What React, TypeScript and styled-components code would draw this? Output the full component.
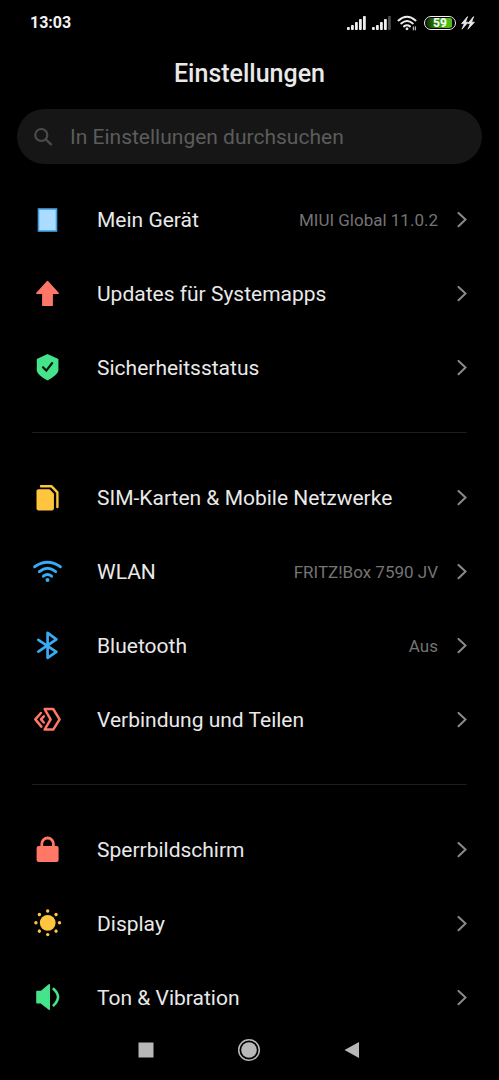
import React from "react";
import styled, { createGlobalStyle } from "styled-components";

const GlobalStyle = createGlobalStyle`
  * { box-sizing: border-box; }
  body {
    margin: 0;
    background: #000;
    color: #e9e9e9;
    font-family: Roboto, "Noto Sans", sans-serif;
  }
`;

const Screen = styled.div`
  display: flex;
  flex-direction: column;
  height: 100vh;
  background: #000;
`;

const StatusBar = styled.div`
  display: flex;
  align-items: center;
  justify-content: space-between;
  flex: none;
  height: 45px;
  padding: 0 24px 0 30px;
`;

const Clock = styled.time`
  font-size: 16px;
  line-height: 20px;
  font-weight: 700;
  color: #f2f2f2;
`;

const StatusIcons = styled.div`
  display: flex;
  align-items: center;
  gap: 6px;
`;

const BatteryGroup = styled.div`
  display: flex;
  align-items: center;
  gap: 5px;
`;

const Battery = styled.div`
  display: flex;
  align-items: center;
  justify-content: center;
  width: 32px;
  height: 14px;
  border: 1px solid #f0f0f0;
  border-radius: 7px;
  background: linear-gradient(90deg, #0c2a02 0, #2c7a08 30%, #4cbc18 70%, #4cbc18 92%, #000 92%) content-box;
  padding: 1px;
  overflow: hidden;
  font-size: 12px;
  line-height: 12px;
  font-weight: 700;
  color: #fff;
`;

const Header = styled.header`
  flex: none;
  padding: 13px 16px 19px;
  text-align: center;
`;

const Title = styled.h1`
  margin: 0;
  font-size: 25px;
  line-height: 32px;
  font-weight: 500;
`;

const SearchBox = styled.label`
  display: flex;
  align-items: center;
  flex: none;
  gap: 17px;
  height: 55px;
  margin: 0 17px 19px;
  padding: 0 16px;
  border-radius: 28px;
  background: #161616;
`;

const SearchInput = styled.input`
  flex: 1;
  min-width: 0;
  padding: 0;
  border: 0;
  outline: 0;
  background: transparent;
  font: inherit;
  font-size: 21px;
  line-height: 28px;
  color: #e9e9e9;
  &::placeholder {
    color: #5c5c5c;
    opacity: 1;
  }
`;

const Content = styled.main`
  flex: 1;
  min-height: 0;
  overflow-y: auto;
  scrollbar-width: none;
`;

const Group = styled.ul`
  list-style: none;
  margin: 0;
  padding: 0;
  & + & {
    padding-top: 27px;
  }
  & + &::before {
    content: "";
    display: block;
    height: 1px;
    margin: 0 32px 28px;
    background: #1e1e1e;
  }
`;

const Row = styled.button`
  display: flex;
  align-items: center;
  width: 100%;
  height: 74px;
  padding: 0 32px;
  border: 0;
  background: transparent;
  font: inherit;
  text-align: left;
  color: inherit;
  cursor: pointer;
`;

const Label = styled.span`
  flex: 1;
  margin-left: 33px;
  font-size: 21px;
  line-height: 28px;
  white-space: nowrap;
`;

const Value = styled.span`
  font-size: 17px;
  line-height: 24px;
  color: #747474;
  white-space: nowrap;
  margin-right: 19px;
`;

const NavBar = styled.nav`
  display: flex;
  align-items: center;
  justify-content: center;
  flex: none;
  gap: 71px;
  height: 60px;
  padding-right: 2px;
`;

const NavButton = styled.button`
  display: flex;
  padding: 4px;
  border: 0;
  background: transparent;
  cursor: pointer;
`;

const RED = "#ff7767";
const BLUE = "#38aaf6";
const GREEN = "#44e38c";
const YELLOW = "#ffc53f";

const glyphs = {
  device: <rect x="6.5" y="5" width="18" height="22" fill="#a9dcff" stroke="#469fe0" strokeWidth="1.6" />,
  update: (
    <path
      d="M15.5 3.4 L26.2 15.2 H20.2 V27.4 H10.8 V15.2 H4.8 Z"
      fill={RED}
      stroke={RED}
      strokeWidth="1.4"
      strokeLinejoin="round"
    />
  ),
  shield: (
    <>
      <path
        d="M15.5 3 L25.5 7.6 V18.6 Q24.6 22.6 15.5 27.4 Q6.4 22.6 5.7 18.6 V7.6 Z"
        fill={GREEN}
        stroke={GREEN}
        strokeWidth="1.8"
        strokeLinejoin="round"
      />
      <path d="M11 15.2 L14.3 18.7 L20.2 11" fill="none" stroke="#04140b" strokeWidth="2.1" strokeLinecap="round" />
    </>
  ),
  sim: (
    <>
      <path
        d="M6 7.8 H17.6 L21.4 11.8 V26.8 Q21.4 28 20.2 28 H6.2 Q5 28 5 26.8 V8.8 Q5 7.8 6 7.8 Z"
        fill={YELLOW}
        stroke={YELLOW}
        strokeLinejoin="round"
      />
      <path
        d="M9 4.2 H19.4 L25.4 10.4 V25"
        fill="none"
        stroke={YELLOW}
        strokeWidth="2.4"
        strokeLinecap="round"
        strokeLinejoin="round"
      />
    </>
  ),
  wlan: (
    <g fill="none" stroke={BLUE} strokeWidth="2.9" strokeLinecap="round">
      <path d="M2.6 10.8 Q15.5 1.8 28.4 10.8" />
      <path d="M7.3 15.6 Q15.5 9 23.7 15.6" />
      <path d="M11.4 20.2 Q15.5 16.8 19.6 20.2" />
      <circle cx="15.5" cy="24" r="2" fill={BLUE} stroke="none" />
    </g>
  ),
  bluetooth: (
    <path
      d="M6.3 9.8 L24.4 21.8 L15.6 27.8 V2.8 L24.4 9.3 L6.3 21.6"
      fill="none"
      stroke={BLUE}
      strokeWidth="2.7"
      strokeLinecap="round"
      strokeLinejoin="round"
    />
  ),
  share: (
    <g fill="none" stroke={RED} strokeWidth="2.5" strokeLinejoin="round" strokeLinecap="round">
      <path d="M12.6 5 H21.2 L27.6 15.4 L21.2 25.6 H12.6 L18.6 15.4 Z" />
      <path d="M8.9 9 L3.3 15.4 L9.4 22.6" />
      <path d="M11.8 12.3 L9 15.4 L11.8 18.5" />
    </g>
  ),
  lock: (
    <>
      <rect x="4.6" y="12" width="22" height="16" rx="2" fill={RED} />
      <path d="M9.8 13 V9.8 A5.8 5.8 0 0 1 21.4 9.8 V13" fill="none" stroke={RED} strokeWidth="2.8" />
    </>
  ),
  sun: (
    <g fill={YELLOW}>
      <circle cx="15.7" cy="14.8" r="7.9" />
      {[0, 45, 90, 135, 180, 225, 270, 315].map((angle) => (
        <circle key={angle} cx="15.7" cy="3" r="1.7" transform={`rotate(${angle} 15.7 14.8)`} />
      ))}
    </g>
  ),
  sound: (
    <>
      <path
        d="M5 9.5 H9.2 L17.2 2.8 V27.2 L9.2 20.8 H5 Z"
        fill={GREEN}
        stroke={GREEN}
        strokeWidth="1.6"
        strokeLinejoin="round"
      />
      <path d="M21.6 7 Q30.4 15 21.6 23.4" fill="none" stroke={GREEN} strokeWidth="2.6" strokeLinecap="round" />
    </>
  ),
};

type Setting = { icon: keyof typeof glyphs; label: string; value?: string };

const groups: Setting[][] = [
  [
    { icon: "device", label: "Mein Gerät", value: "MIUI Global 11.0.2" },
    { icon: "update", label: "Updates für Systemapps" },
    { icon: "shield", label: "Sicherheitsstatus" },
  ],
  [
    { icon: "sim", label: "SIM-Karten & Mobile Netzwerke" },
    { icon: "wlan", label: "WLAN", value: "FRITZ!Box 7590 JV" },
    { icon: "bluetooth", label: "Bluetooth", value: "Aus" },
    { icon: "share", label: "Verbindung und Teilen" },
  ],
  [
    { icon: "lock", label: "Sperrbildschirm" },
    { icon: "sun", label: "Display" },
    { icon: "sound", label: "Ton & Vibration" },
  ],
];

const Chevron = () => (
  <svg width="10" height="16" viewBox="0 0 10 16" fill="none" stroke="#8a8a8a" strokeWidth="2" strokeLinecap="round" aria-hidden>
    <path d="M1.5 1 L8.5 7.6 L1.5 14.2" />
  </svg>
);

const Signal = ({ bars }: { bars: number }) => (
  <svg width="19" height="14" viewBox="0 0 19 14" aria-hidden>
    {[3, 5, 8, 11, 14].map((h, i) => (
      <rect key={h} x={i * 4} y={14 - h} width="2.8" height={h} rx="0.8" fill={i < bars ? "#ededed" : "#4a4a4a"} />
    ))}
  </svg>
);

export default function App() {
  return (
    <>
      <GlobalStyle />
      <Screen>
        <StatusBar>
          <Clock>13:03</Clock>
          <StatusIcons>
            <Signal bars={5} />
            <Signal bars={4} />
            <svg width="21" height="16" viewBox="0 0 21 16" fill="none" stroke="#ededed" strokeWidth="2" strokeLinecap="round" aria-hidden>
              <path d="M1.5 5.4 Q10 -2 18.5 5.4" />
              <path d="M4.2 8.4 Q10 3.6 15.8 8.4" />
              <path d="M7 11.4 Q10 9 13 11.4" />
              <circle cx="10" cy="13.8" r="1.4" fill="#ededed" stroke="none" />
              <path d="M16.4 11.8 V14.8 M18.4 11.8 V14.8" stroke="#b4b4b4" strokeWidth="1.3" />
            </svg>
            <BatteryGroup>
              <Battery>59</Battery>
              <svg width="14" height="14" viewBox="0 0 14 14" fill="#ededed" stroke="#ededed" strokeWidth="0.8" strokeLinejoin="round" aria-hidden>
                <path d="M6.6 0.6 L0.6 7.6 H3.4 L1 13.2 L7 6.2 H4.4 Z" />
                <path d="M12.6 0.6 L6.8 7.6 H9.4 L7 13.2 L13.4 6.2 H10.6 Z" />
              </svg>
            </BatteryGroup>
          </StatusIcons>
        </StatusBar>
        <Header>
          <Title>Einstellungen</Title>
        </Header>
        <SearchBox>
          <svg width="20" height="20" viewBox="0 0 20 20" fill="none" stroke="#4b4b4b" strokeWidth="2.2" strokeLinecap="round" aria-hidden>
            <circle cx="8.3" cy="8" r="6" />
            <path d="M12.8 12.4 L18 17.4" />
          </svg>
          <SearchInput type="text" placeholder="In Einstellungen durchsuchen" aria-label="In Einstellungen durchsuchen" />
        </SearchBox>
        <Content>
          {groups.map((group) => (
            <Group key={group[0].label}>
              {group.map(({ icon, label, value }) => (
                <li key={label}>
                  <Row type="button">
                    <svg width="32" height="32" viewBox="0 0 32 32" aria-hidden>
                      {glyphs[icon]}
                    </svg>
                    <Label>{label}</Label>
                    {value && <Value>{value}</Value>}
                    <Chevron />
                  </Row>
                </li>
              ))}
            </Group>
          ))}
        </Content>
        <NavBar>
          <NavButton type="button" aria-label="Letzte Apps">
            <svg width="24" height="24" viewBox="0 0 24 24" aria-hidden>
              <rect x="4.5" y="4.5" width="15" height="15" fill="#b8b8b8" />
            </svg>
          </NavButton>
          <NavButton type="button" aria-label="Startseite">
            <svg width="24" height="24" viewBox="0 0 24 24" aria-hidden>
              <circle cx="12" cy="12" r="10.3" fill="none" stroke="#b8b8b8" strokeWidth="1.5" />
              <circle cx="12" cy="12" r="7.8" fill="#b8b8b8" />
            </svg>
          </NavButton>
          <NavButton type="button" aria-label="Zurück">
            <svg width="24" height="24" viewBox="0 0 24 24" aria-hidden>
              <path d="M4.5 12 L19 4 V20 Z" fill="#b8b8b8" />
            </svg>
          </NavButton>
        </NavBar>
      </Screen>
    </>
  );
}
